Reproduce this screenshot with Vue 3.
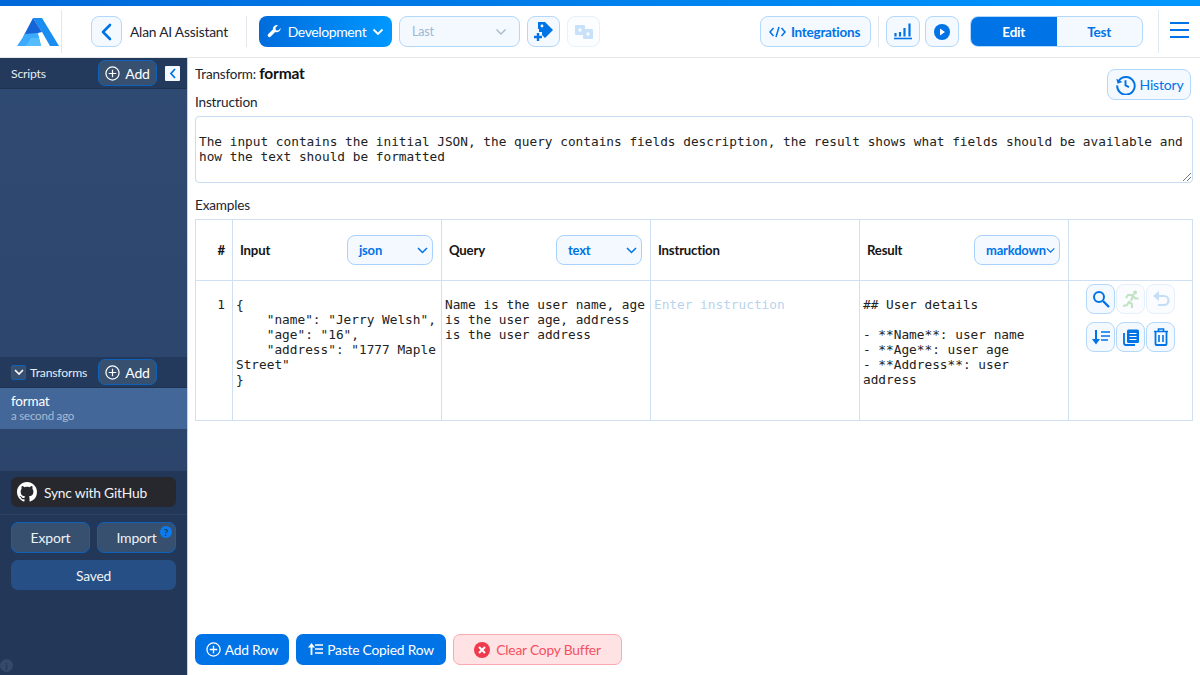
<template>
  <div class="app">
    <div class="top-strip"></div>
    <header class="topbar">
      <div class="logo-box">
        <svg width="42" height="28" viewBox="0 0 42 28">
          <path d="M16 0h9L42 28H33L25 14z" fill="#1a8df0" />
          <path d="M16 0l9 14-4 1-15 4z" fill="#1565d8" />
          <path d="M8 16l13-1 3 13H0z" fill="#3cabff" />
          <path d="M14 20h8l2 8H9z" fill="#55bdfd" />
        </svg>
      </div>
      <button class="btn square back" type="button">
        <svg width="16" height="20" viewBox="0 0 16 20"><path d="M11 3 4 10l7 7" fill="none" stroke="#0073e6" stroke-width="2.6" stroke-linecap="round" stroke-linejoin="round" /></svg>
      </button>
      <span class="project-name">Alan AI Assistant</span>
      <i class="vline first"></i>
      <button class="btn dev" type="button">
        <svg width="15" height="15" viewBox="0 0 24 24"><path d="M22 6.500a6.500 6.500 0 0 1-8.800 6.100L6 20a2.800 2.800 0 0 1-4-4l7.400-7.200A6.500 6.500 0 0 1 17.500 2l-4 4 .6 3.900 3.900.6 4-4z" fill="#fff" /></svg>
        <span>Development</span>
        <svg width="12" height="8" viewBox="0 0 12 8"><path d="m1.500 1.500 4.500 4.500 4.500-4.500" fill="none" stroke="#fff" stroke-width="1.800" /></svg>
      </button>
      <div class="btn last-select">
        <span>Last</span>
        <svg width="12" height="8" viewBox="0 0 12 8"><path d="m1.500 1.500 4.500 4.500 4.500-4.500" fill="none" stroke="#a9b8c8" stroke-width="1.400" /></svg>
      </div>
      <button class="btn square wide" type="button">
        <svg width="20" height="22" viewBox="0 0 20 22">
          <path d="M4 1h7l8 8-8 8-3-3v-3H5V8H4z" fill="#0073e6" />
          <circle cx="8" cy="5" r="1.400" fill="#fff" />
          <path d="M4 12v8M0 16h8" stroke="#0073e6" stroke-width="2.400" />
        </svg>
      </button>
      <button class="btn square wide faded" type="button">
        <svg width="18" height="14" viewBox="0 0 18 14">
          <rect x="0" y="0" width="10" height="10" rx="1" fill="#a9d0f5" />
          <rect x="8" y="4" width="10" height="10" rx="1" fill="#a9d0f5" />
          <path d="M3 5h4M5 3v4M11 9h4M13 7v4" stroke="#fff" stroke-width="1.200" />
        </svg>
      </button>
      <div class="spacer"></div>
      <button class="btn integrations" type="button">
        <svg width="17" height="12" viewBox="0 0 17 12"><path d="M4.500 2 1 6l3.500 4M12.500 2 16 6l-3.500 4M10 1 7 11" fill="none" stroke="#0073e6" stroke-width="1.500" /></svg>
        <span>Integrations</span>
      </button>
      <i class="vline"></i>
      <button class="btn square stat" type="button">
        <svg width="18" height="17" viewBox="0 0 18 17"><path d="M0 15.500h18" stroke="#0073e6" stroke-width="1.600" /><path d="M1.500 10v3.500M6 9v4.500M10.500 5v8.500M15.500 0.500v13" stroke="#0073e6" stroke-width="2.200" /></svg>
      </button>
      <button class="btn square stat play" type="button">
        <svg width="16" height="16" viewBox="0 0 16 16"><circle cx="8" cy="8" r="8" fill="#0073e6" /><path d="M6 4.500v7l5-3.500z" fill="#fff" /></svg>
      </button>
      <div class="mode-switch">
        <span class="mode active">Edit</span>
        <span class="mode">Test</span>
      </div>
      <i class="vline menu-line"></i>
      <button class="menu" type="button" aria-label="Menu"><i></i><i></i><i></i></button>
    </header>

    <div class="body">
      <aside class="sidebar">
        <div class="side-head">
          <span class="side-title">Scripts</span>
          <button class="side-add" type="button">
            <svg class="plus" width="15" height="15" viewBox="0 0 16 16"><circle cx="8" cy="8" r="7" fill="none" stroke="#fff" stroke-width="1.300" /><path d="M8 4v8M4 8h8" stroke="#fff" stroke-width="1.300" /></svg>
            Add
          </button>
          <span class="collapse">
            <svg width="8" height="11" viewBox="0 0 8 11"><path d="M6 1 2 5.500 6 10" fill="none" stroke="#0073e6" stroke-width="1.800" /></svg>
          </span>
        </div>
        <div class="side-list"></div>
        <div class="side-head transforms">
          <span class="toggle">
            <svg width="10" height="7" viewBox="0 0 10 7"><path d="m1 1 4 4 4-4" fill="none" stroke="#fff" stroke-width="1.600" /></svg>
          </span>
          <span class="side-title small">Transforms</span>
          <button class="side-add" type="button">
            <svg class="plus" width="15" height="15" viewBox="0 0 16 16"><circle cx="8" cy="8" r="7" fill="none" stroke="#fff" stroke-width="1.300" /><path d="M8 4v8M4 8h8" stroke="#fff" stroke-width="1.300" /></svg>
            Add
          </button>
        </div>
        <div class="side-item">
          <div class="item-name">format</div>
          <div class="item-time">a second ago</div>
        </div>
        <div class="side-rest"></div>
        <div class="side-foot">
          <div class="git-wrap">
            <button class="github" type="button">
              <svg width="20" height="20" viewBox="0 0 16 16"><path fill="#fff" d="M8 0C3.580 0 0 3.580 0 8c0 3.540 2.290 6.530 5.470 7.590.4.070.55-.17.55-.38 0-.19-.01-.82-.01-1.490-2.010.37-2.530-.49-2.690-.94-.09-.23-.48-.94-.82-1.130-.28-.15-.68-.52-.01-.53.630-.01 1.080.58 1.230.82.720 1.210 1.870.87 2.330.66.070-.52.280-.87.510-1.070-1.780-.2-3.640-.89-3.640-3.950 0-.87.310-1.590.82-2.150-.08-.2-.36-1.020.08-2.120 0 0 .67-.21 2.200.82.640-.18 1.320-.27 2-.27s1.360.09 2 .27c1.530-1.040 2.200-.82 2.200-.82.440 1.100.160 1.920.08 2.120.51.560.82 1.270.82 2.150 0 3.070-1.870 3.750-3.650 3.950.29.25.54.73.54 1.480 0 1.070-.01 1.930-.01 2.200 0 .21.150.46.550.38A8.010 8.010 0 0 0 16 8c0-4.420-3.580-8-8-8z" /></svg>
              Sync with GitHub
            </button>
          </div>
          <div class="foot-actions">
            <div class="foot-row">
              <button class="foot-btn" type="button">Export</button>
              <button class="foot-btn import" type="button">Import<span class="help">?</span></button>
            </div>
            <button class="saved" type="button">Saved</button>
          </div>
          <span class="info-dot">i</span>
        </div>
      </aside>

      <main class="main">
        <div class="title-row">
          <div class="title">Transform: <b>format</b></div>
          <button class="btn history" type="button">
            <svg width="21" height="21" viewBox="0 0 24 24"><path d="M4.500 7.500A10 10 0 1 1 2.500 13" fill="none" stroke="#0073e6" stroke-width="2.200" /><path d="M1.500 5.500 3 11l5.500-2z" fill="#0073e6" /><path d="M12 7v6l4 2" fill="none" stroke="#0073e6" stroke-width="2.200" /></svg>
            History
          </button>
        </div>
        <div class="label instruction-label">Instruction</div>
        <div class="instruction-box">
          The input contains the initial JSON, the query contains fields description, the result shows what fields should be available and how the text should be formatted
          <svg class="grip" width="10" height="10" viewBox="0 0 10 10"><path d="M9 1 1 9M9 5 5 9" stroke="#777" stroke-width="1" /></svg>
        </div>
        <div class="label examples-label">Examples</div>
        <table class="examples">
          <colgroup>
            <col style="width: 37px" />
            <col v-for="n in 4" :key="n" style="width: 209px" />
            <col />
          </colgroup>
          <thead>
            <tr>
              <th class="num">#</th>
              <th v-for="col in columns" :key="col.name">
                <div class="th-inner">
                  <span>{{ col.name }}</span>
                  <span v-if="col.type" class="type-select">
                    {{ col.type }}
                    <svg width="11" height="7" viewBox="0 0 11 7"><path d="m1 1 4.500 4.500L10 1" fill="none" stroke="#0073e6" stroke-width="1.500" /></svg>
                  </span>
                </div>
              </th>
              <th></th>
            </tr>
          </thead>
          <tbody>
            <tr>
              <td class="num mono">1</td>
              <td class="mono pre">{{ inputText }}</td>
              <td class="mono pre">Name is the user name, age is the user age, address is the user address</td>
              <td class="mono placeholder">Enter instruction</td>
              <td class="mono pre result">{{ resultText }}</td>
              <td class="actions-cell">
                <div class="row-actions">
                  <button class="btn act" type="button">
                    <svg width="18" height="18" viewBox="0 0 18 18"><circle cx="7" cy="7" r="5" fill="none" stroke="#0073e6" stroke-width="2" /><path d="m11 11 6 6" stroke="#0073e6" stroke-width="2.400" /></svg>
                  </button>
                  <button class="btn act off" type="button">
                    <svg width="18" height="18" viewBox="0 0 18 18"><circle cx="13" cy="2.500" r="2" fill="#c4e2c4" /><path d="M1 16l4-1 2-3 3 2v4M4 8l2-3h5l-2 6M11 6l2 2.500h3.500" fill="none" stroke="#c4e2c4" stroke-width="2.200" /></svg>
                  </button>
                  <button class="btn act off" type="button">
                    <svg width="18" height="16" viewBox="0 0 18 16"><path d="M6 5h6a4.500 4.500 0 0 1 0 9H6" fill="none" stroke="#c5def6" stroke-width="2.200" /><path d="M7 0v10L1 5z" fill="#c5def6" /></svg>
                  </button>
                  <button class="btn act" type="button">
                    <svg width="18" height="16" viewBox="0 0 18 16"><path d="M4 1v12" stroke="#0073e6" stroke-width="2" /><path d="M0 10h8l-4 5.500z" fill="#0073e6" /><path d="M9 3h9M9 7h9M9 11h7" stroke="#0073e6" stroke-width="1.500" /></svg>
                  </button>
                  <button class="btn act" type="button">
                    <svg width="16" height="17" viewBox="0 0 16 17"><path d="M1 4v10a2 2 0 0 0 2 2h9" fill="none" stroke="#0073e6" stroke-width="1.800" /><rect x="4" y="0.500" width="12" height="13.500" rx="1.500" fill="#0073e6" /><path d="M6.500 4.500h7M6.500 7.500h7M6.500 10.500h7" stroke="#fff" stroke-width="1.200" /></svg>
                  </button>
                  <button class="btn act" type="button">
                    <svg width="16" height="18" viewBox="0 0 16 18"><path d="M1 3.500h14M5.500 3V1h5v2" fill="none" stroke="#0073e6" stroke-width="1.600" /><path d="M2.500 4v12a1 1 0 0 0 1 1h9a1 1 0 0 0 1-1V4" fill="none" stroke="#0073e6" stroke-width="1.800" /><path d="M6 7v7M10 7v7" stroke="#0073e6" stroke-width="1.600" /></svg>
                  </button>
                </div>
              </td>
            </tr>
          </tbody>
        </table>
        <div class="bottom-bar">
          <button class="solid" type="button">
            <svg width="15" height="15" viewBox="0 0 16 16"><circle cx="8" cy="8" r="7" fill="none" stroke="#fff" stroke-width="1.400" /><path d="M8 4v8M4 8h8" stroke="#fff" stroke-width="1.400" /></svg>
            Add Row
          </button>
          <button class="solid paste" type="button">
            <svg width="15" height="13" viewBox="0 0 15 13"><path d="M3.500 12V3" stroke="#fff" stroke-width="1.800" /><path d="M0 4.500 3.500 0 7 4.500z" fill="#fff" /><path d="M7 2h8M7 6h8M7 10h8" stroke="#fff" stroke-width="1.400" /></svg>
            Paste Copied Row
          </button>
          <button class="danger" type="button">
            <svg width="16" height="16" viewBox="0 0 16 16"><circle cx="8" cy="8" r="8" fill="#f03a4b" /><path d="m5 5 6 6M11 5l-6 6" stroke="#fff" stroke-width="2" /></svg>
            Clear Copy Buffer
          </button>
        </div>
      </main>
    </div>
  </div>
</template>

<script setup>
const columns = [
  { name: 'Input', type: 'json' },
  { name: 'Query', type: 'text' },
  { name: 'Instruction', type: '' },
  { name: 'Result', type: 'markdown' }
]

const inputText = `{
    "name": "Jerry Welsh",
    "age": "16",
    "address": "1777 Maple Street"
}`

const resultText = `## User details

- **Name**: user name
- **Age**: user age
- **Address**: user address`
</script>

<style>
html,
body {
  margin: 0;
  background: #fff;
}
</style>

<style scoped>
.app {
  width: 1200px;
  height: 675px;
  display: flex;
  flex-direction: column;
  overflow: hidden;
  color: #1c2430;
  font-family: Lato, "Liberation Sans", sans-serif;
  font-size: 13.500px;
  letter-spacing: -0.2px;
}

button {
  font-family: inherit;
  letter-spacing: inherit;
  cursor: pointer;
}

.top-strip {
  height: 6px;
  flex: none;
  background: linear-gradient(90deg, #0068d9, #0098ff);
}

.topbar {
  height: 52px;
  flex: none;
  display: flex;
  align-items: center;
  box-sizing: border-box;
  padding-right: 11px;
  background: #fff;
  border-bottom: 1px solid #e6e8ea;
}

.logo-box {
  width: 62px;
  height: 43px;
  flex: none;
  display: flex;
  align-items: center;
  padding-left: 17px;
  box-sizing: border-box;
  margin-right: 29px;
  border-right: 1px solid #e3e8ee;
}

.btn {
  height: 31px;
  flex: none;
  box-sizing: border-box;
  display: inline-flex;
  align-items: center;
  justify-content: center;
  color: #0073e6;
  background: #f3f9ff;
  border: 1px solid #b4d8fa;
  border-radius: 8px;
  padding: 0;
}

.square {
  width: 31px;
}

.square.wide {
  width: 33px;
  margin-left: 7px;
}

.faded {
  background: #fbfdff;
  border-color: #e6f1fc;
}

.faded svg {
  opacity: 0.6;
}

.project-name {
  margin-left: 8px;
  width: 98px;
  font-size: 13.800px;
  white-space: nowrap;
}

.vline {
  width: 1px;
  height: 31px;
  flex: none;
  background: #e3e6ea;
}

.vline.first {
  margin: 0 12px 0 18px;
}

.dev {
  width: 133px;
  gap: 6px;
  color: #fff;
  font-size: 14px;
  letter-spacing: -0.4px;
  border: none;
  background: linear-gradient(90deg, #006cdc, #0098ff);
}

.last-select {
  width: 121px;
  margin-left: 7px;
  padding: 0 12px;
  justify-content: space-between;
  color: #9db8d4;
  font-size: 12.500px;
}

.spacer {
  flex: 1;
}

.integrations {
  width: 111px;
  gap: 5px;
  font-size: 13.500px;
  font-weight: 700;
  letter-spacing: -0.25px;
  padding-right: 2px;
}

.integrations + .vline {
  margin: 0 7px;
}

.stat {
  width: 34px;
}

.play {
  margin: 0 11px 0 5px;
}

.mode-switch {
  width: 173px;
  height: 31px;
  flex: none;
  display: flex;
  box-sizing: border-box;
  overflow: hidden;
  background: #f3f9ff;
  border: 1px solid #b4d8fa;
  border-radius: 8px;
  font-size: 13.500px;
  font-weight: 700;
}

.mode {
  flex: 1;
  display: flex;
  align-items: center;
  justify-content: center;
  color: #0073e6;
}

.mode.active {
  color: #fff;
  background: #0073e6;
}

.vline.menu-line {
  height: 43px;
  background: #dfe9f3;
  margin: 0 11px 0 15px;
}

.menu {
  width: 19px;
  height: 16px;
  margin-bottom: 3px;
  padding: 0;
  flex: none;
  border: none;
  background: none;
  display: flex;
  flex-direction: column;
  justify-content: space-between;
}

.menu i {
  height: 2px;
  background: #0073e6;
}

.body {
  flex: 1;
  min-height: 0;
  display: flex;
}

.sidebar {
  width: 188px;
  flex: none;
  display: flex;
  flex-direction: column;
  color: #fff;
  background: linear-gradient(180deg, #2f4a72, #2b4268);
  border-right: 1px solid #c7d3e2;
  box-sizing: border-box;
}

.side-head {
  height: 30px;
  flex: none;
  display: flex;
  align-items: center;
  position: relative;
  padding-left: 11px;
  background: #233a5c;
  border-bottom: 1px solid #1e3250;
}

.side-title {
  font-size: 12.200px;
  color: #e6edf5;
}

.side-title.small {
  margin-left: 4px;
}

.side-add {
  position: absolute;
  left: 98px;
  top: 2px;
  width: 59px;
  height: 26px;
  display: flex;
  align-items: center;
  justify-content: center;
  gap: 5px;
  padding: 0;
  color: #fff;
  font-size: 14px;
  background: #37506f;
  border: 1px solid #0f62b8;
  border-radius: 7px;
}

.collapse {
  position: absolute;
  left: 165px;
  top: 8px;
  width: 15px;
  height: 15px;
  display: flex;
  align-items: center;
  justify-content: center;
  background: #f3f9ff;
  border-radius: 1px;
}

.toggle {
  width: 15px;
  height: 15px;
  display: flex;
  align-items: center;
  justify-content: center;
  box-sizing: border-box;
  background: #37506f;
  border: 1px solid #0f62b8;
  border-radius: 2px;
}

.side-list {
  flex: 1;
}

.side-item {
  height: 41px;
  flex: none;
  box-sizing: border-box;
  padding: 5px 11px 0;
  background: #44679a;
}

.item-name {
  font-size: 13.500px;
  line-height: 16px;
}

.item-time {
  font-size: 11.500px;
  line-height: 14px;
  color: #a9bbd3;
}

.side-rest {
  height: 42px;
  flex: none;
}

.side-foot {
  height: 204px;
  flex: none;
  position: relative;
  background: #233858;
}

.git-wrap {
  padding: 6px 11px 7px;
  border-bottom: 1px solid #2d4363;
}

.github {
  width: 165px;
  height: 30px;
  display: flex;
  align-items: center;
  gap: 7px;
  padding: 0 6px;
  color: #f0f2f5;
  font-size: 13.800px;
  background: #26282d;
  border: none;
  border-radius: 6px;
}

.foot-actions {
  display: flex;
  flex-direction: column;
  gap: 7px;
  padding: 7px 11px;
}

.foot-row {
  display: flex;
  gap: 7px;
}

.foot-btn {
  flex: 1;
  height: 31px;
  position: relative;
  padding: 0;
  color: #edf1f6;
  font-size: 14px;
  background: #37506f;
  border: 1px solid #0f62b8;
  border-radius: 7px;
}

.help {
  position: absolute;
  right: 3px;
  top: 3px;
  width: 12px;
  height: 12px;
  display: flex;
  align-items: center;
  justify-content: center;
  color: #233858;
  font-size: 10px;
  font-weight: 700;
  background: #0a7cf0;
  border-radius: 50%;
}

.saved {
  height: 30px;
  padding: 0;
  color: #f0f3f7;
  font-size: 13.800px;
  background: #265085;
  border: none;
  border-radius: 7px;
}

.info-dot {
  position: absolute;
  left: 0;
  bottom: 3px;
  width: 13px;
  height: 13px;
  display: flex;
  align-items: center;
  justify-content: center;
  color: #233858;
  font-size: 10px;
  font-weight: 700;
  background: #344a68;
  border-radius: 50%;
}

.main {
  flex: 1;
  min-width: 0;
  display: flex;
  flex-direction: column;
  box-sizing: border-box;
  padding: 0 7px 10px;
}

.title-row {
  height: 42px;
  flex: none;
  display: flex;
  justify-content: space-between;
  align-items: flex-start;
}

.title {
  padding-top: 7px;
  font-size: 13.500px;
  line-height: 17px;
}

.title b {
  font-size: 15.500px;
  font-weight: 700;
  color: #111;
}

.history {
  width: 84px;
  height: 31px;
  margin: 11px 2px 0 0;
  gap: 4px;
  font-size: 14px;
}

.label {
  font-size: 13.600px;
  line-height: 17px;
}

.instruction-label {
  margin-top: -6px;
}

.instruction-box {
  height: 67px;
  flex: none;
  position: relative;
  margin-top: 5px;
  box-sizing: border-box;
  padding: 17px 3px 0;
  font-family: "DejaVu Sans Mono", "Liberation Mono", monospace;
  font-size: 12.780px;
  letter-spacing: 0;
  line-height: 15px;
  color: #222;
  border: 1px solid #c9dcf0;
  border-radius: 4px;
}

.grip {
  position: absolute;
  right: 0;
  bottom: 0;
}

.examples-label {
  margin-top: 14px;
}

.examples {
  width: 998px;
  height: 202px;
  flex: none;
  margin-top: 5px;
  table-layout: fixed;
  border-collapse: collapse;
}

.examples th,
.examples td {
  border: 1.500px solid #cfe0f3;
  padding: 0;
}

.examples th {
  height: 60px;
  font-size: 13.200px;
  font-weight: 700;
  text-align: left;
  color: #151515;
}

.th-inner {
  display: flex;
  align-items: center;
  justify-content: space-between;
  padding: 0 8px 0 7px;
}

.type-select {
  width: 86px;
  height: 30px;
  box-sizing: border-box;
  display: flex;
  align-items: center;
  justify-content: space-between;
  padding: 0 4px 0 11px;
  color: #0073e6;
  font-size: 13px;
  white-space: nowrap;
  background: #f3f9ff;
  border: 1px solid #a9d2fa;
  border-radius: 8px;
}

.examples th.num {
  text-align: right;
  padding-right: 7px;
}

.examples td {
  vertical-align: top;
  padding: 16px 3px 0 3px;
}

.mono {
  font-family: "DejaVu Sans Mono", "Liberation Mono", monospace;
  font-size: 12.780px;
  letter-spacing: 0;
  line-height: 15px;
  color: #222;
}

.pre {
  white-space: pre-wrap;
  overflow-wrap: break-word;
}

.examples td.num {
  text-align: right;
  padding-right: 7px;
}

.placeholder {
  color: #b9d3ee;
}

.examples td.actions-cell {
  padding: 3px 0 0 17px;
}

.row-actions {
  width: 90px;
  display: grid;
  grid-template-columns: repeat(3, 29px);
  gap: 8px 1px;
}

.act {
  width: 29px;
  height: 30px;
}

.act.off {
  background: #fafcff;
  border-color: #e4f0fc;
}

.bottom-bar {
  margin-top: auto;
  display: flex;
  gap: 7px;
}

.solid,
.danger {
  height: 31px;
  display: flex;
  align-items: center;
  justify-content: center;
  gap: 4px;
  padding: 0;
  font-size: 13.800px;
  border-radius: 7px;
}

.solid {
  width: 94px;
  color: #fff;
  background: #0073e6;
  border: none;
}

.solid.paste {
  width: 150px;
}

.danger {
  width: 169px;
  gap: 6px;
  color: #f4505f;
  background: #fee2e4;
  border: 1px solid #fbaab1;
}
</style>
